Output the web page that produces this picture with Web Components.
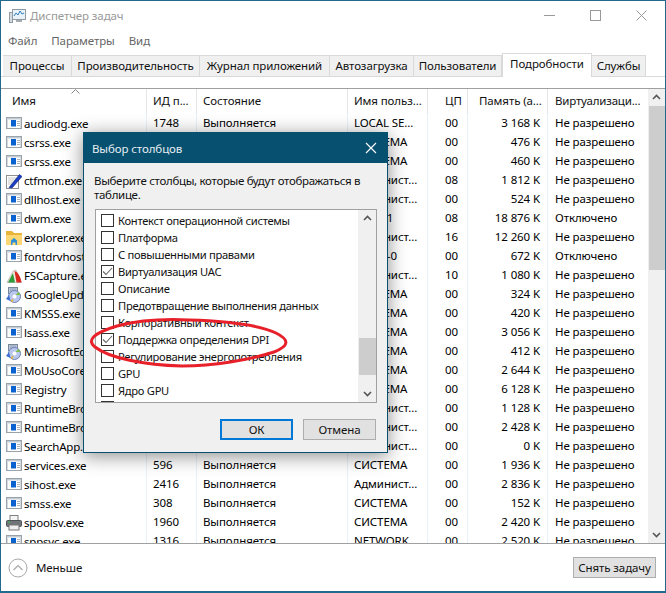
<!DOCTYPE html>
<html lang="ru">
<head>
<meta charset="utf-8">
<title>Диспетчер задач</title>
<style>
  html, body { margin: 0; padding: 0; background: #fff; }
  body { font: 11.5px "Noto Sans", "Liberation Sans", sans-serif; color: #000; }
</style>
</head>
<body>
<task-window></task-window>
<script>
const ICONS = {
  app: `<rect x="0.5" y="1.5" width="15" height="11" fill="#fff" stroke="#98a3ab"/><rect x="1" y="2" width="14" height="1.5" fill="#c3ccd3"/><rect x="5" y="4" width="5" height="6.500" fill="#0a62d0"/><path d="M11 5.500h3M11 7.500h3M11 9.500h3" stroke="#a9b3bb"/><path d="M1.500 3.500v8.500M14.500 3.500v8.500" stroke="#d5dade"/>`,
  pen: `<rect x="0.5" y="2.500" width="12" height="13" fill="#fff" stroke="#222" stroke-dasharray="1 1"/><path d="M2 5h9M2 7h8M2 9h6M2 11h5" stroke="#c8c8c8"/><path d="M3 14.500L13.500 1.500l2.500 2L6 15z" fill="#1a3ec6" stroke="#0a1c70" stroke-width=".6"/>`,
  folder: `<path d="M0 1h6l2 2h8v12H0z" fill="#e8b43a"/><path d="M0 5h16v10H0z" fill="#fcd773"/><path d="M5 15V10.500L8 8l3 2.500V15H9.500v-2.500h-3V15z" fill="#2a8fd8"/>`,
  capture: `<path d="M1 14.500L7 3l3-1 5.500 12.500z" fill="#efe9df" stroke="#9a9a9a" stroke-width=".5"/><path d="M2 14.500L7 5l2 9.500z" fill="#2f9b3a"/><path d="M8.500 3c3 1 6 5 7 11.500L10.500 14.500z" fill="#d8281e"/>`,
  setup: `<rect x="2.500" y="0.5" width="9" height="6" fill="#cdd7e6" stroke="#7a8798"/><path d="M3.500 2h7M3.500 4h7" stroke="#8294b0"/><circle cx="8.500" cy="9.500" r="6" fill="#b9c6ee" stroke="#6f80b4"/><circle cx="8.500" cy="9.500" r="2" fill="#fff"/><path d="M9.500 8l3-3 2 3z" fill="#7bc043"/><path d="M7.500 11.500l-3 2 2 2z" fill="#e6b43c"/><path d="M0 12l3-4 1.500 6z" fill="#3e6fd0"/>`,
  printer: `<rect x="4" y="0.5" width="8" height="6" fill="#f4f4f4" stroke="#808080"/><rect x="0.5" y="5.500" width="15" height="6" rx="1" fill="#6f7579" stroke="#4d5256"/><rect x="3" y="10" width="10" height="5" fill="#eee" stroke="#777"/><path d="M2 7h2" stroke="#37c24a"/>`
};

const BASE_FONT = `font-family: "Noto Sans", "Liberation Sans", sans-serif; font-size: 11.5px; letter-spacing: -0.1px;`;

class AppIcon extends HTMLElement {
  connectedCallback() {
    this.attachShadow({ mode: 'open' });
    const name = this.getAttribute('name') || 'app';
    this.shadowRoot.innerHTML = `
      <style>
        :host { display: inline-block; width: 16px; height: 16px; flex: none; }
        svg { display: block; }
      </style>
      <svg width="16" height="16" viewBox="0 0 16 16">${ICONS[name]}</svg>
    `;
  }
}

class TitleBar extends HTMLElement {
  connectedCallback() {
    this.attachShadow({ mode: 'open' });
    this.shadowRoot.innerHTML = `
      <style>
        :host { display: flex; align-items: center; height: 29px; padding-left: 8px; color: #999; flex: none; }
        svg { display: block; flex: none; }
        .label { margin-left: 3px; flex: 1; }
        .controls { display: flex; padding-right: 18px; gap: 35px; }
      </style>
      <svg width="18" height="18" viewBox="0 0 18 18">
        <rect x="3.500" y="2.500" width="13" height="10" fill="#e8f1f8" stroke="#8f9aa3"/>
        <path d="M5 9l2-3 2 2 2-4 2 3 2-1" fill="none" stroke="#2f7fc0"/>
        <rect x="7" y="13" width="6" height="2" fill="#a5adb3"/>
        <rect x="0.5" y="5.500" width="3" height="10" fill="#d7dbde" stroke="#8f9aa3"/>
      </svg>
      <span class="label">Диспетчер задач</span>
      <div class="controls">
        <svg width="11" height="11" viewBox="0 0 11 11"><path d="M0 5.500h11" stroke="#999"/></svg>
        <svg width="11" height="11" viewBox="0 0 11 11"><rect x=".5" y=".5" width="10" height="10" fill="none" stroke="#999"/></svg>
        <svg width="11" height="11" viewBox="0 0 11 11"><path d="M.5.5l10 10M10.500.5l-10 10" stroke="#999"/></svg>
      </div>
    `;
  }
}

class MenuBar extends HTMLElement {
  connectedCallback() {
    this.attachShadow({ mode: 'open' });
    this.shadowRoot.innerHTML = `
      <style>
        :host { display: flex; height: 21px; align-items: center; gap: 14px; padding-left: 7px; color: #666; flex: none; }
      </style>
      <span>Файл</span><span>Параметры</span><span>Вид</span>
    `;
  }
}

class TabStrip extends HTMLElement {
  connectedCallback() {
    this.attachShadow({ mode: 'open' });
    const tabs = [
      ['Процессы', 69], ['Производительность', 128], ['Журнал приложений', 130],
      ['Автозагрузка', 84], ['Пользователи', 88], ['Подробности', 90], ['Службы', 54]
    ];
    this.shadowRoot.innerHTML = `
      <style>
        :host { display: flex; height: 21px; padding-left: 2px; margin-top: 4px; flex: none;
                border-bottom: 1px solid #d9d9d9; }
        .tab { box-sizing: border-box; height: 21px; background: #f0f0f0; border: 1px solid #d9d9d9;
               border-bottom: 0; border-left-width: 0; text-align: center; line-height: 19px; white-space: nowrap; color: #111; }
        .tab:first-child { border-left-width: 1px; }
        .tab.on { background: #fff; height: 24px; margin-top: -2px; margin-bottom: -1px; line-height: 20px; border-left-width: 1px; position: relative; z-index: 1; }
      </style>
      ${tabs.map(([t, w]) => `<div class="tab${t === 'Подробности' ? ' on' : ''}" style="width:${w}px">${t}</div>`).join('')}
    `;
  }
}

class ProcRow extends HTMLElement {
  connectedCallback() {
    this.attachShadow({ mode: 'open' });
    const a = n => this.getAttribute(n) || '';
    this.shadowRoot.innerHTML = `
      <style>
        :host { display: grid; grid-template-columns: var(--cols); height: 19px; line-height: 18px; white-space: nowrap; }
        div { overflow: hidden; box-sizing: border-box; border-right: 1px solid #e8f0f8; }
        .name { display: flex; align-items: center; gap: 2px; padding-left: 1px; letter-spacing: -0.2px; }
        .pid, .state, .user { padding-left: 6px; }
        .cpu { padding-left: 17px; }
        .mem { text-align: right; padding-right: 7px; }
        .virt { padding-left: 7px; border-right: 0; }
      </style>
      <div class="name"><app-icon name="${a('icon') || 'app'}"></app-icon><span>${a('name')}</span></div>
      <div class="pid">${a('pid')}</div>
      <div class="state">${a('state')}</div>
      <div class="user">${a('user')}</div>
      <div class="cpu">${a('cpu')}</div>
      <div class="mem">${a('mem')}</div>
      <div class="virt">${a('virt')}</div>
    `;
  }
}

class ScrollBar extends HTMLElement {
  connectedCallback() {
    this.attachShadow({ mode: 'open' });
    const top = this.getAttribute('thumb-top');
    const h = this.getAttribute('thumb-height');
    this.shadowRoot.innerHTML = `
      <style>
        :host { display: flex; flex-direction: column; justify-content: space-between; position: relative; background: #f0f0f0; flex: none; }
        svg { display: block; margin: 5px auto; }
        .thumb { position: absolute; left: 1px; right: 0; background: #cdcdcd; }
      </style>
      <svg width="9" height="6" viewBox="0 0 9 6"><path d="M1 5l3.500-3.500L8 5" fill="none" stroke="#555" stroke-width="1.600"/></svg>
      <div class="thumb" style="top:${top}px;height:${h}px"></div>
      <svg width="9" height="6" viewBox="0 0 9 6"><path d="M1 1l3.500 3.500L8 1" fill="none" stroke="#555" stroke-width="1.600"/></svg>
    `;
  }
}

class ProcTable extends HTMLElement {
  connectedCallback() {
    this.attachShadow({ mode: 'open' });
    const ok = 'Не разрешено', off = 'Отключено', run = 'Выполняется', sys = 'СИСТЕМА', adm = 'Админист...';
    const rows = [
      ['app', 'audiodg.exe', '1748', run, 'LOCAL SE...', '00', '3 168 K', ok],
      ['app', 'csrss.exe', '', '', sys, '00', '476 K', ok],
      ['app', 'csrss.exe', '', '', sys, '00', '460 K', ok],
      ['pen', 'ctfmon.exe', '', '', adm, '08', '1 812 K', ok],
      ['app', 'dllhost.exe', '', '', adm, '00', '524 K', ok],
      ['app', 'dwm.exe', '', '', 'DWM-1', '08', '18 876 K', off],
      ['folder', 'explorer.exe', '', '', adm, '16', '12 260 K', ok],
      ['app', 'fontdrvhost.exe', '', '', 'UMFD-0', '00', '672 K', off],
      ['capture', 'FSCapture.exe', '', '', adm, '10', '1 080 K', ok],
      ['setup', 'GoogleUpdate.exe', '', '', sys, '00', '324 K', ok],
      ['app', 'KMSSS.exe', '', '', sys, '00', '420 K', ok],
      ['app', 'lsass.exe', '', '', sys, '00', '3 056 K', ok],
      ['setup', 'MicrosoftEdge.exe', '', '', sys, '00', '412 K', ok],
      ['app', 'MoUsoCoreWorker.exe', '', '', sys, '00', '2 644 K', ok],
      ['app', 'Registry', '', '', sys, '00', '6 128 K', ok],
      ['app', 'RuntimeBroker.exe', '', '', adm, '00', '1 128 K', ok],
      ['app', 'RuntimeBroker.exe', '', '', adm, '00', '2 428 K', ok],
      ['app', 'SearchApp.exe', '', '', adm, '00', '0 K', ok],
      ['app', 'services.exe', '596', run, sys, '00', '1 936 K', ok],
      ['app', 'sihost.exe', '2416', run, adm, '00', '2 836 K', ok],
      ['app', 'smss.exe', '308', run, sys, '00', '152 K', ok],
      ['printer', 'spoolsv.exe', '1960', run, sys, '00', '2 420 K', ok],
      ['app', 'sppsvc.exe', '1316', run, 'NETWORK...', '00', '2 520 K', ok]
    ];
    const head = ['Имя', 'ИД п...', 'Состояние', 'Имя польз...', 'ЦП', 'Память (а...', 'Виртуализаци...'];
    const cls = ['h-name', 'h-pid', 'h-state', 'h-user', 'h-cpu', 'h-mem', 'h-virt'];
    this.shadowRoot.innerHTML = `
      <style>
        :host { display: flex; flex: 1; min-height: 0; margin-top: 11px; border-top: 1px solid #a0a0a0; border-bottom: 1px solid #a0a0a0;
                --cols: 142px 50px 151px 80px 40px 80px 100px; overflow: hidden; }
        .main { flex: 1; padding-left: 4px; min-width: 0; overflow: hidden; position: relative; }
        .head { display: grid; grid-template-columns: var(--cols); height: 25px; line-height: 23px; color: #111; white-space: nowrap; }
        .head div { box-sizing: border-box; border-right: 1px solid #e5e5e5; overflow: hidden; }
        .h-name { padding-left: 7px; }
        .h-pid, .h-state, .h-user { padding-left: 6px; }
        .h-cpu { padding-left: 17px; }
        .h-mem { padding-left: 11px; }
        .h-virt { padding-left: 7px; border-right: 0 !important; letter-spacing: -0.2px; }
        .sort { position: absolute; left: 70px; top: 0; }
        scroll-bar { width: 17px; }
      </style>
      <div class="main">
        <svg class="sort" width="9" height="5" viewBox="0 0 9 5"><path d="M.5 4.500L4.500.5l4 4" fill="none" stroke="#888"/></svg>
        <div class="head">${head.map((t, i) => `<div class="${cls[i]}">${t}</div>`).join('')}</div>
        ${rows.map(r => `<proc-row icon="${r[0]}" name="${r[1]}" pid="${r[2]}" state="${r[3]}" user="${r[4]}" cpu="${r[5]}" mem="${r[6]}" virt="${r[7]}"></proc-row>`).join('')}
      </div>
      <scroll-bar thumb-top="17" thumb-height="164"></scroll-bar>
    `;
  }
}

class TaskButton extends HTMLElement {
  connectedCallback() {
    this.attachShadow({ mode: 'open' });
    this.shadowRoot.innerHTML = `
      <style>
        :host { display: inline-flex; align-items: center; justify-content: center; box-sizing: border-box; height: 21px;
                background: #e1e1e1; border: 1px solid #adadad; color: #111; white-space: nowrap; flex: none; }
        :host([default]) { border: 2px solid #0078d7; }
      </style>
      <slot></slot>
    `;
  }
}

class FooterBar extends HTMLElement {
  connectedCallback() {
    this.attachShadow({ mode: 'open' });
    this.shadowRoot.innerHTML = `
      <style>
        :host { display: flex; align-items: center; height: 47px; padding: 0 9px 0 7px; flex: none; color: #111; }
        svg { display: block; flex: none; }
        .less { margin-left: 8px; flex: 1; }
        task-button { width: 83px; }
      </style>
      <svg width="20" height="20" viewBox="0 0 20 20"><circle cx="10" cy="10" r="9" fill="#fff" stroke="#a8a8a8"/><path d="M5.500 12L10 7.500l4.500 4.500" fill="none" stroke="#a8a8a8" stroke-width="1.200"/></svg>
      <span class="less">Меньше</span>
      <task-button>Снять задачу</task-button>
    `;
  }
}

class CheckItem extends HTMLElement {
  connectedCallback() {
    this.attachShadow({ mode: 'open' });
    this.shadowRoot.innerHTML = `
      <style>
        :host { display: flex; align-items: center; gap: 4px; height: 17px; padding-left: 5px; white-space: nowrap; color: #111;
                font-size: 11.2px; letter-spacing: -0.3px; }
        svg { display: block; flex: none; }
      </style>
      <svg width="13" height="13" viewBox="0 0 13 13">
        <rect x=".5" y=".5" width="12" height="12" fill="#fff" stroke="#333"/>
        ${this.hasAttribute('checked') ? '<path d="M2 6.500l3 3 6-6.500" fill="none" stroke="#666" stroke-width="1.100"/>' : ''}
      </svg>
      <span><slot></slot></span>
    `;
  }
}

class ColumnDialog extends HTMLElement {
  connectedCallback() {
    this.attachShadow({ mode: 'open' });
    this.shadowRoot.innerHTML = `
      <style>
        :host { display: flex; flex-direction: column; position: absolute; left: 82px; top: 131px; width: 305px; height: 321px; box-sizing: border-box;
                background: #f0f0f0; border: 1px solid #07506f; box-shadow: 0 3px 18px rgba(0,0,0,.45); color: #111; z-index: 5; }
        .title { display: flex; align-items: center; justify-content: space-between; height: 30px; flex: none; background: #07506f; color: #e6eef2; padding: 0 10px 0 8px; }
        svg { display: block; }
        .intro { margin: 11px 10px 0 10px; line-height: 13.5px; letter-spacing: -0.32px; }
        .list { display: flex; margin: 8px 10px 0 11px; height: 194px; border: 1px solid #a0a0a0; background: #fff; box-sizing: border-box; overflow: hidden; flex: none; }
        .items { flex: 1; padding-top: 2px; overflow: hidden; }
        scroll-bar { width: 18px; }
        .buttons { display: flex; justify-content: flex-end; gap: 10px; padding: 16px 11px 0 0; }
        task-button { width: 73px; }
      </style>
      <div class="title">
        <span>Выбор столбцов</span>
        <svg width="12" height="12" viewBox="0 0 12 12"><path d="M1 1l10 10M11 1L1 11" stroke="#fff" stroke-width="1.100"/></svg>
      </div>
      <div class="intro">Выберите столбцы, которые будут отображаться в таблице.</div>
      <div class="list">
        <div class="items">
          <check-item>Контекст операционной системы</check-item>
          <check-item>Платформа</check-item>
          <check-item>С повышенными правами</check-item>
          <check-item checked>Виртуализация UAC</check-item>
          <check-item>Описание</check-item>
          <check-item>Предотвращение выполнения данных</check-item>
          <check-item>Корпоративный контекст</check-item>
          <check-item checked>Поддержка определения DPI</check-item>
          <check-item>Регулирование энергопотребления</check-item>
          <check-item>GPU</check-item>
          <check-item>Ядро GPU</check-item>
          <check-item></check-item>
        </div>
        <scroll-bar thumb-top="128" thumb-height="37"></scroll-bar>
      </div>
      <div class="buttons">
        <task-button default>ОК</task-button>
        <task-button>Отмена</task-button>
      </div>
    `;
  }
}

class RedMark extends HTMLElement {
  connectedCallback() {
    this.attachShadow({ mode: 'open' });
    this.shadowRoot.innerHTML = `
      <style>
        :host { position: absolute; left: 83px; top: 311px; width: 210px; height: 60px; z-index: 6; pointer-events: none; }
        svg { display: block; }
      </style>
      <svg width="210" height="60" viewBox="0 0 210 60">
        <path d="M33 14C60 7 85 7 105 8C140 9 175 13 192 21C206 28 205 34 190 40C165 48 130 54 98 54C60 53 25 46 11 35C2 28 10 21 33 14Z" fill="none" stroke="#e8202a" stroke-width="3"/>
      </svg>
    `;
  }
}

class TaskWindow extends HTMLElement {
  connectedCallback() {
    this.attachShadow({ mode: 'open' });
    this.shadowRoot.innerHTML = `
      <style>
        :host { display: flex; flex-direction: column; position: relative; width: 666px; height: 593px; box-sizing: border-box;
                border: 1px solid #1f6a8f; border-bottom-width: 2px; background: #fff; overflow: hidden; ${BASE_FONT} }
      </style>
      <title-bar></title-bar>
      <menu-bar></menu-bar>
      <tab-strip></tab-strip>
      <proc-table></proc-table>
      <footer-bar></footer-bar>
      <column-dialog></column-dialog>
      <red-mark></red-mark>
    `;
  }
}

customElements.define('app-icon', AppIcon);
customElements.define('title-bar', TitleBar);
customElements.define('menu-bar', MenuBar);
customElements.define('tab-strip', TabStrip);
customElements.define('proc-row', ProcRow);
customElements.define('scroll-bar', ScrollBar);
customElements.define('proc-table', ProcTable);
customElements.define('task-button', TaskButton);
customElements.define('footer-bar', FooterBar);
customElements.define('check-item', CheckItem);
customElements.define('column-dialog', ColumnDialog);
customElements.define('red-mark', RedMark);
customElements.define('task-window', TaskWindow);
</script>
</body>
</html>
